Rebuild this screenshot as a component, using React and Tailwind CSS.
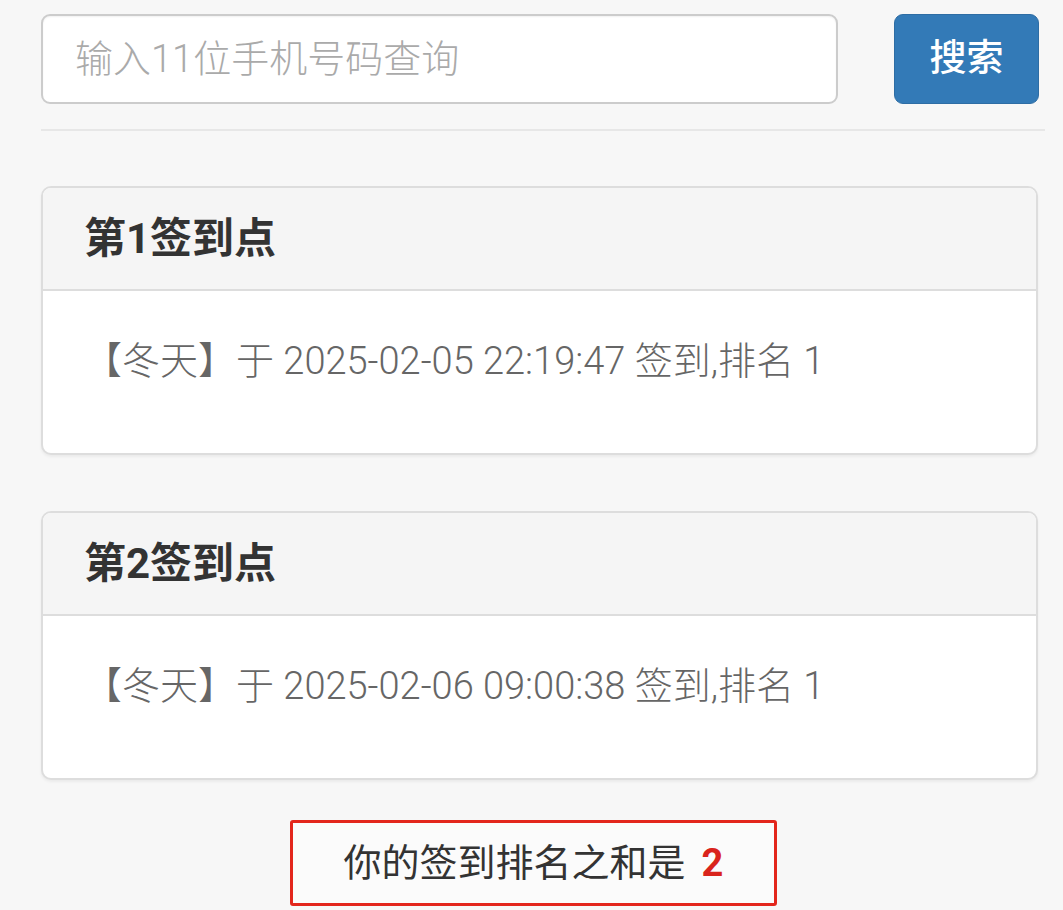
import { useState } from 'react';

const records = [
  { title: '第1签到点', name: '冬天', time: '2025-02-05 22:19:47', rank: 1 },
  { title: '第2签到点', name: '冬天', time: '2025-02-06 09:00:38', rank: 1 },
];

const font = {
  fontFamily: 'Roboto, "Noto Sans CJK SC", "Noto Sans", sans-serif',
};

const SignPanel = ({ item }) => {
  return (
    <div className="rounded-[10px] border-2 border-[#dddddd] bg-white shadow-[0_2px_3px_rgba(0,0,0,0.05)] overflow-hidden">
      <div className="h-[103px] flex items-center px-[41px] bg-[#f5f5f5] border-b-2 border-[#dddddd]">
        <h3 className="text-[42px] font-bold text-[#333333] leading-none">
          {item.title}
        </h3>
      </div>
      <div className="h-[162px] flex items-center px-[41px] pb-[22px]">
        <p className="text-[38px] font-light text-[#666666] whitespace-nowrap">
          【{item.name}】于 {item.time} 签到,排名 {item.rank}
        </p>
      </div>
    </div>
  );
};

const App = () => {
  const [phone, setPhone] = useState('');

  return (
    <div
      className="min-h-[910px] bg-[#f7f7f7] pl-[41px] pr-[24px] pt-[14px]"
      style={font}
    >
      {/* search bar */}
      <div className="flex items-center gap-[56px]">
        <input
          type="text"
          value={phone}
          onChange={(e) => setPhone(e.target.value)}
          placeholder="输入11位手机号码查询"
          className="flex-1 h-[90px] rounded-[9px] border-2 border-[#cccccc] bg-white px-[32px] text-[38px] font-light text-[#555555] placeholder:text-[#aaaaaa] outline-none shadow-[inset_0_1px_2px_rgba(0,0,0,0.06)]"
        />
        <button className="w-[145px] h-[90px] rounded-[9px] bg-[#337ab7] border border-[#2e6da4] text-white text-[37px] font-medium">
          搜索
        </button>
      </div>

      <hr className="mt-[25px] mr-[-6px] border-t-2 border-[#e7e7e7]" />

      <div className="mt-[55px] flex flex-col gap-[56px] pr-px">
        {records.map((item) => (
          <SignPanel key={item.title} item={item} />
        ))}
      </div>

      {/* total */}
      <div className="flex mt-[40px] ml-[249px]">
        <div className="w-[487px] h-[86px] border-[3px] border-[#e3261c] rounded-[3px] bg-[#fbfbfb] flex items-center justify-center">
          <span className="text-[38px] text-[#333333]">你的签到排名之和是</span>
          <span className="text-[38px] font-bold text-[#d9241c] ml-[16px]">
            2
          </span>
        </div>
      </div>
    </div>
  );
};

export default App;
